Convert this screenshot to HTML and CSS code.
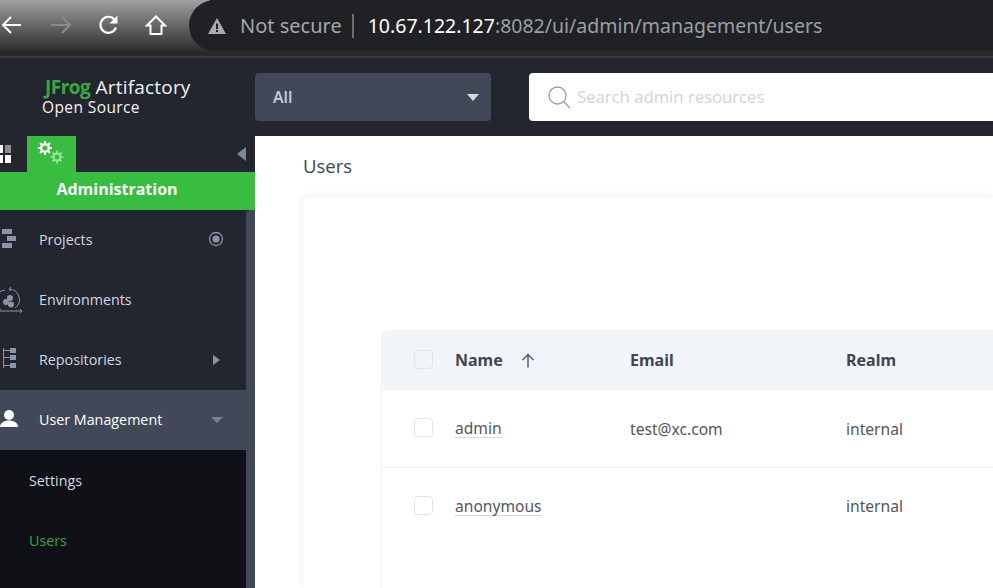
FILE: index.html
```html
<!DOCTYPE html>
<html lang="en">
<head>
    <meta charset="UTF-8">
    <meta name="viewport" content="width=device-width, initial-scale=1.0">
    <title>Users - JFrog Artifactory</title>
    <link rel="stylesheet" href="styles.css">
</head>
<body>

<div class="browser">
    <div class="browser-btns">
        <svg class="back" width="24" height="24" viewBox="0 0 24 24" fill="none" stroke="#fff" stroke-width="2"><path d="M21 12H3M11 4l-8 8 8 8"/></svg>
        <svg class="forward" width="24" height="24" viewBox="0 0 24 24" fill="none" stroke="#8a8a8a" stroke-width="2"><path d="M2 12h19M13 4l8 8-8 8"/></svg>
        <svg class="reload" width="24" height="24" viewBox="0 0 24 24" fill="none"><path d="M19 14.500A8 8 0 1 1 17.500 6.500" stroke="#fff" stroke-width="2.200"/><path d="M20.500 2.500v8h-8z" fill="#fff"/></svg>
        <svg class="home" width="24" height="24" viewBox="0 0 24 24" fill="none" stroke="#fff" stroke-width="2"><path d="M3 12.500 12 3.500l9 9h-3.500V21h-11v-8.500z"/></svg>
    </div>
    <div class="address">
        <svg width="20" height="18" viewBox="0 0 20 18"><path d="M10 1 19 17H1z" fill="#a9abad"/><path d="M9 6.500h2v5.500H9zM9 13h2v2H9z" fill="#202124"/></svg>
        <span class="not-secure">Not secure</span>
        <span class="address-sep"></span>
        <span class="url"><span class="host">10.67.122.127</span>:8082/ui/admin/management/users</span>
    </div>
</div>

<header class="topbar">
    <div class="logo">
        <div class="logo-name"><b>JFrog</b> Artifactory</div>
        <div class="logo-sub">Open Source</div>
    </div>
    <div class="scope">
        <span>All</span>
        <i class="caret-down"></i>
    </div>
    <div class="search">
        <svg width="24" height="24" viewBox="0 0 24 24" fill="none" stroke="#9a9da3" stroke-width="1.300"><circle cx="10.500" cy="10.500" r="8.500"/><path d="M16.500 16.500 23 23"/></svg>
        <span>Search admin resources</span>
    </div>
</header>

<div class="layout">
    <aside class="sidebar">
        <div class="tabs">
            <svg class="tab-grid" width="14" height="18" viewBox="0 0 14 18"><path d="M0 0h5v8H0zM0 10h5v8H0zM7 10h6v8H7z" fill="#fff"/><path d="M7 0h6v8H7z" fill="#8f8f8f"/></svg>
            <div class="tab-admin">
                <svg width="28" height="26" viewBox="0 0 28 26">
                    <g fill="none" stroke="#fff" stroke-width="2.500"><circle cx="8" cy="8" r="3.800"/><path stroke-width="2" d="M8 1v3M8 12v3M1 8h3M12 8h3M3 3l2 2M11 11l2 2M13 3l-2 2M5 11l-2 2"/></g>
                    <g fill="none" stroke="#9be49f" stroke-width="2"><circle cx="20" cy="17" r="3.500"/><path stroke-width="1.700" d="M20 10.500v3M20 20.500v3M13.500 17h3M23.500 17h3M15.500 12.500l2 2M22.500 19.500l2 2M24.500 12.500l-2 2M17.500 19.500l-2 2"/></g>
                </svg>
            </div>
            <i class="collapse"></i>
        </div>
        <div class="admin-title">Administration</div>
        <div class="sidebar-body">
            <nav class="nav">
                <div class="nav-row">
                    <svg class="nav-icon" width="24" height="24" viewBox="0 0 24 24" fill="#8b95a8"><path d="M5 1h10v5H5zM10 8h9v5h-9zM5 15h10v5H5z"/></svg>
                    <span class="nav-label">Projects</span>
                    <svg class="nav-end" width="16" height="16" viewBox="0 0 16 16"><circle cx="8" cy="8" r="6.500" fill="none" stroke="#8b95a8" stroke-width="1.300"/><circle cx="8" cy="8" r="3.500" fill="#8b95a8"/></svg>
                </div>
                <div class="nav-row">
                    <svg class="nav-icon" width="26" height="24" viewBox="0 0 26 24" fill="none" stroke="#8b95a8" stroke-width="1"><path d="M12 1a10.500 10.500 0 0 1 6 19M8 2a10.500 10.500 0 0 0-4 19.500M3 23h22M23 21l2 2-2 2M14 -1l-2 2 2 2"/><g fill="#8b95a8" stroke="none"><circle cx="9" cy="14" r="3"/><circle cx="13" cy="10" r="3"/><circle cx="14" cy="16.500" r="3"/></g></svg>
                    <span class="nav-label nav-label-wide">Environments</span>
                </div>
                <div class="nav-row">
                    <svg class="nav-icon" width="24" height="24" viewBox="0 0 24 24" fill="none" stroke="#8b95a8"><path d="M6.500 0v20M6.500 2.500H13M6.500 9.500H13M6.500 17.500H13"/><path d="M13 0h6v5h-6zM13 7h6v5h-6zM13 15h6v5h-6z" fill="#8b95a8" stroke="none"/></svg>
                    <span class="nav-label">Repositories</span>
                    <i class="caret-right"></i>
                </div>
                <div class="nav-row active">
                    <svg class="nav-icon" width="24" height="24" viewBox="0 0 24 24" fill="#fff"><circle cx="12" cy="7" r="5"/><path d="M3 19c0-4 4-6.500 9-6.500s9 2.500 9 6.500z"/></svg>
                    <span class="nav-label">User Management</span>
                    <i class="caret-open"></i>
                </div>
                <div class="sub">
                    <div class="sub-row">Settings</div>
                    <div class="sub-row current">Users</div>
                </div>
            </nav>
            <div class="scrollbar"></div>
        </div>
    </aside>

    <main class="content">
        <h1>Users</h1>
        <section class="card">
            <div class="users-table">
                <div class="tr th">
                    <div class="col-check"><span class="check"></span></div>
                    <div class="col-name">Name
                        <svg width="14" height="15" viewBox="0 0 14 15" fill="none" stroke="#565d74" stroke-width="1.500"><path d="M7 14.500V1.500M1.500 7 7 1.500 12.500 7"/></svg>
                    </div>
                    <div class="col-email">Email</div>
                    <div class="col-realm">Realm</div>
                </div>
                <div class="tr row-first">
                    <div class="col-check"><span class="check"></span></div>
                    <div class="col-name"><span class="user-link">admin</span></div>
                    <div class="col-email">test@xc.com</div>
                    <div class="col-realm">internal</div>
                </div>
                <div class="tr">
                    <div class="col-check"><span class="check"></span></div>
                    <div class="col-name"><span class="user-link">anonymous</span></div>
                    <div class="col-email"></div>
                    <div class="col-realm">internal</div>
                </div>
            </div>
        </section>
    </main>
</div>

</body>
</html>
```

FILE: styles.css
```css
html, body {
    margin: 0;
    height: 100%;
    overflow: hidden;
}
body {
    width: 993px;
    height: 588px;
    background: #fff;
    font-family: 'Open Sans', 'Noto Sans', sans-serif;
    display: flex;
    flex-direction: column;
}

/* browser bar */
.browser {
    height: 56px;
    flex: none;
    display: flex;
    background: #28292c;
    border-bottom: 2px solid #3a3b3e;
}
.browser-btns {
    width: 210px;
    flex: none;
    margin-right: -21px;
    height: 56px;
    background: linear-gradient(#a0a0a0, #27282a 95%);
    display: flex;
    align-items: center;
    padding-bottom: 6px;
    box-sizing: border-box;
}
.back { margin-left: 0; }
.forward { margin-left: 25px; }
.reload { margin-left: 24px; }
.home { margin-left: 23px; }
.address {
    flex: 1;
    height: 51px;
    background: #202124;
    border-radius: 26px 0 0 26px;
    display: flex;
    align-items: center;
    padding-left: 18px;
    font-family: 'Noto Sans', 'Open Sans', sans-serif;
    font-size: 20px;
    color: #9aa0a6;
    white-space: nowrap;
}
.not-secure {
    margin-left: 13px;
    color: #a4a7aa;
}
.address-sep {
    width: 2px;
    height: 24px;
    background: #6b6d70;
    margin: 0 14px 0 10px;
}
.url { font-size: 19.500px; }
.host { color: #fff; }

/* app header */
.topbar {
    height: 78px;
    flex: none;
    background: #23262f;
    display: flex;
    align-items: flex-start;
}
.logo {
    width: 255px;
    flex: none;
    padding: 16px 0 0 42px;
    box-sizing: border-box;
    color: #f2f3f5;
}
.logo-name {
    font-size: 19px;
    line-height: 26px;
    margin-left: 3px;
    letter-spacing: 0.2px;
}
.logo-name b {
    color: #3aa544;
    font-weight: 700;
    letter-spacing: -0.5px;
}
.logo-sub {
    font-size: 15.500px;
    line-height: 15px;
    letter-spacing: 0.4px;
}
.scope {
    width: 236px;
    height: 48px;
    margin-top: 15px;
    flex: none;
    background: #414857;
    border-radius: 4px;
    display: flex;
    align-items: center;
    justify-content: space-between;
    padding: 0 12px 0 18px;
    box-sizing: border-box;
    color: #c6cfe0;
    font-size: 16px;
    font-weight: 600;
}
.caret-down {
    width: 0;
    height: 0;
    border-left: 6px solid transparent;
    border-right: 6px solid transparent;
    border-top: 7px solid #d5d9e0;
}
.search {
    flex: 1;
    height: 48px;
    margin: 15px 0 0 38px;
    background: #fff;
    border-radius: 4px 0 0 4px;
    display: flex;
    align-items: center;
    gap: 6px;
    padding-left: 18px;
    padding-bottom: 1px;
    box-sizing: border-box;
    color: #ccd4e2;
    font-size: 16.700px;
}

/* sidebar */
.layout {
    flex: 1;
    display: flex;
    min-height: 0;
}
.sidebar {
    width: 255px;
    flex: none;
    background: #23262f;
    display: flex;
    flex-direction: column;
}
.tabs {
    height: 36px;
    flex: none;
    display: flex;
    align-items: center;
}
.tab-grid {
    margin-left: -2px;
    flex: none;
}
.tab-admin {
    width: 49px;
    height: 36px;
    margin-left: 15px;
    background: #38bd40;
    display: flex;
    padding: 4px 0 0 10px;
    box-sizing: border-box;
}
.collapse {
    width: 0;
    height: 0;
    margin-left: auto;
    margin-right: 9px;
    border-top: 7px solid transparent;
    border-bottom: 7px solid transparent;
    border-right: 9px solid #7c8aa0;
}
.admin-title {
    height: 38px;
    flex: none;
    background: #38bd40;
    color: #fff;
    font-size: 16px;
    font-weight: 700;
    line-height: 34px;
    text-align: center;
    padding-right: 21px;
}
.sidebar-body {
    flex: 1;
    display: flex;
    min-height: 0;
}
.nav {
    flex: 1;
    min-width: 0;
}
.nav-row {
    height: 60px;
    display: flex;
    align-items: center;
    color: #d3d8e2;
    font-size: 14.300px;
    font-weight: 500;
}
.nav-row.active {
    background: #414857;
    color: #fff;
}
.nav-icon {
    margin-left: -3px;
    flex: none;
    overflow: visible;
}
.nav-label {
    margin-left: 18px;
    margin-bottom: 2px;
}
.nav-label-wide {
    margin-left: 16px;
}
.nav-end {
    margin-left: auto;
    margin-right: 22px;
    margin-bottom: 2px;
}
.caret-right {
    margin-left: auto;
    margin-right: 26px;
    width: 0;
    height: 0;
    border-top: 5.500px solid transparent;
    border-bottom: 5.500px solid transparent;
    border-left: 7px solid #8b95a8;
}
.caret-open {
    margin-left: auto;
    margin-right: 23px;
    width: 0;
    height: 0;
    border-left: 6px solid transparent;
    border-right: 6px solid transparent;
    border-top: 6px solid #76809a;
}
.sub {
    background: #101116;
    height: 138px;
}
.sub-row {
    height: 60px;
    padding-left: 29px;
    font-size: 14.300px;
    font-weight: 500;
    line-height: 62px;
    color: #d3d8e2;
}
.sub-row.current {
    color: #3aa544;
}
.scrollbar {
    width: 9px;
    flex: none;
    background: #414857;
    border-radius: 4px 0 0 0;
}

/* main */
.content {
    flex: 1;
    min-width: 0;
    padding-left: 48px;
    background: #fff;
}
h1 {
    margin: 0;
    height: 61px;
    font-size: 18.500px;
    font-weight: 400;
    line-height: 59px;
    color: #3f4555;
}
.card {
    height: 391px;
    padding: 133px 0 0 78px;
    box-sizing: border-box;
    border-radius: 4px 0 0 0;
    box-shadow: 0 0 8px rgba(60, 70, 90, 0.09);
}
.users-table {
    font-family: 'Noto Sans', 'Open Sans', sans-serif;
    font-size: 15.600px;
    color: #53565e;
    border-left: 1px solid #f0f2f6;
    border-radius: 5px 0 0 0;
    height: 258px;
}
.tr {
    display: flex;
    align-items: center;
    height: 76px;
}
.th {
    height: 60px;
    background: #f2f5f9;
    border-radius: 5px 0 0 0;
    color: #3e4556;
    font-size: 16px;
    font-weight: 700;
}
.row-first {
    height: 77px;
    border-bottom: 1px solid #eff1f5;
}
.col-check {
    width: 73px;
    flex: none;
    padding-left: 32px;
    padding-bottom: 2px;
    box-sizing: border-box;
    display: flex;
}
.check {
    width: 17px;
    height: 17px;
    border: 1px solid #e1e4ec;
    border-radius: 4px;
    background: #fff;
}
.th .check {
    background: #f2f5f9;
}
.col-name {
    width: 175px;
    flex: none;
    display: flex;
    align-items: center;
    gap: 18px;
}
.col-email {
    width: 216px;
    flex: none;
}
.user-link {
    border-bottom: 1px solid #d5d7dc;
    line-height: 18px;
}
```
